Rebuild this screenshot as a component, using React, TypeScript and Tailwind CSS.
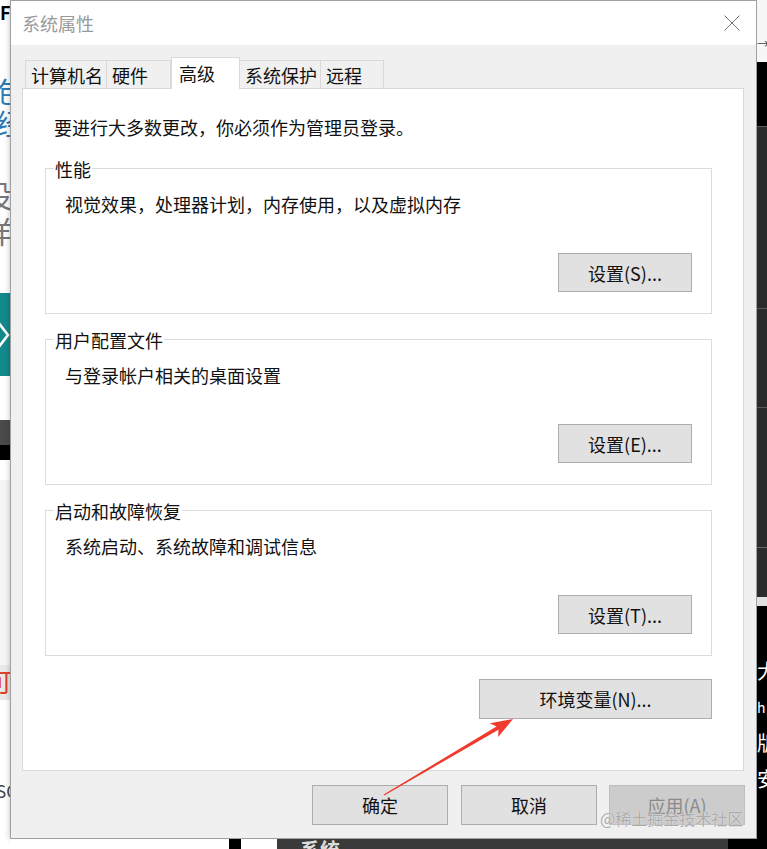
import React from "react";

const TABS = [
  { label: "计算机名", w: "w-[82px]", active: false },
  { label: "硬件", w: "w-[65px]", active: false },
  { label: "高级", w: "w-[69px]", active: true },
  { label: "系统保护", w: "w-[82px]", active: false },
  { label: "远程", w: "w-[64px]", active: false },
];

const GROUPS = [
  { title: "性能", text: "视觉效果，处理器计划，内存使用，以及虚拟内存", button: "设置(S)..." },
  { title: "用户配置文件", text: "与登录帐户相关的桌面设置", button: "设置(E)..." },
  { title: "启动和故障恢复", text: "系统启动、系统故障和调试信息", button: "设置(T)..." },
];

function WinButton({
  children,
  className = "",
  disabled = false,
}: {
  children: React.ReactNode;
  className?: string;
  disabled?: boolean;
}) {
  return (
    <button
      className={`flex items-center justify-center border text-[18px] leading-none ${
        disabled
          ? "bg-[#cccccc] border-[#bfbfbf] text-[#8a8a8a]"
          : "bg-[#e1e1e1] border-[#adadad] text-[#111]"
      } ${className}`}
    >
      {children}
    </button>
  );
}

function GroupBox({ title, text, button }: { title: string; text: string; button: string }) {
  return (
    <div className="w-[667px] border border-[#dcdcdc] flex flex-col pb-[21px]">
      <div className="-mt-[12px] ml-[8px] w-fit bg-white px-[1px] leading-[24px]">{title}</div>
      <div className="mt-[11px] pl-[19px] leading-[24px]">{text}</div>
      <div className="mt-[37px] pr-[19px] flex justify-end">
        <WinButton className="w-[134px] h-[39px]">{button}</WinButton>
      </div>
    </div>
  );
}

function LeftStrip() {
  return (
    <div className="w-[10px] flex flex-col overflow-hidden bg-white">
      <div className="h-[45px] pt-[2px] text-[18px] font-bold leading-[20px] text-black">F</div>
      <div className="h-[95px] pt-[30px] -ml-[4px] text-[28px] leading-[32px] text-[#2d7bb6]">
        <div>包</div>
        <div>经</div>
      </div>
      <div className="h-[153px] pt-[36px] -ml-[18px] text-[30px] leading-[36px] text-[#777]">
        <div>设</div>
        <div>详</div>
      </div>
      <div className="h-[83px] bg-[#12898b] flex items-center">
        <svg width="10" height="30" viewBox="0 0 10 30">
          <polyline points="-2,2 8,15 -2,28" fill="none" stroke="white" strokeWidth="2.5" />
        </svg>
      </div>
      <div className="h-[44px] bg-white" />
      <div className="h-[25px] bg-[#4a4a4a]" />
      <div className="h-[15px] bg-black" />
      <div className="h-[205px] bg-[#f6f6f6] border-t-[20px] border-white" />
      <div className="h-[35px] bg-[#e9e9e9] -ml-[14px] text-[26px] leading-[32px] text-[#e0412a]">可</div>
      <div className="h-[80px] bg-white" />
      <div className="h-[60px] -ml-[4px] text-[17px] leading-[22px] text-[#444]">SC</div>
    </div>
  );
}

function RightStrip() {
  return (
    <div className="w-[10px] flex flex-col overflow-hidden">
      <div className="h-[62px] bg-[#f7f7f7] pt-[37px] text-[12px] leading-[14px] text-[#444]">→</div>
      <div className="h-[64px] bg-black" />
      <div className="h-[182px] bg-[#2b2b2b] border-t border-[#5a5a5a]" />
      <div className="h-[99px] bg-[#2b2b2b] border-t border-[#5a5a5a]" />
      <div className="h-[140px] bg-[#2b2b2b] border-t border-[#5a5a5a]" />
      <div className="h-[50px] bg-[#2b2b2b] border-t border-[#666]" />
      <div className="h-[9px] bg-[#e0e0e0]" />
      <div className="flex-1 bg-black text-white text-[20px] leading-[26px] pt-[52px] flex flex-col gap-[10px]">
        <div>大</div>
        <div className="text-[14px]">h</div>
        <div>版</div>
        <div>安</div>
      </div>
    </div>
  );
}

export default function App() {
  return (
    <div className="relative w-[767px] h-[849px] overflow-hidden bg-white flex font-['Microsoft_YaHei','Noto_Sans_CJK_SC',sans-serif] text-[18px] text-[#111]">
      <LeftStrip />

      <div className="w-[747px] flex flex-col">
        {/* Dialog */}
        <div className="h-[839px] flex flex-col border border-[#a0a0a0] bg-[#f0f0f0] shadow-[0_0_6px_rgba(0,0,0,0.25)]">
          <div className="h-[44px] bg-white flex items-center justify-between pl-[11px] pr-[16px]">
            <span className="text-[#9a9a9a] leading-none">系统属性</span>
            <svg width="16" height="16" viewBox="0 0 16 16">
              <path d="M0.5,0.5 L15.5,15.5 M15.5,0.5 L0.5,15.5" stroke="#777" strokeWidth="1" />
            </svg>
          </div>

          <div className="flex-1 flex flex-col pt-[12px] pl-[11px]">
            {/* Tabs */}
            <div className="flex items-end ml-[3px] h-[31px]">
              {TABS.map((t) =>
                t.active ? (
                  <div
                    key={t.label}
                    className={`${t.w} h-[32px] -mb-px z-10 bg-white border border-b-0 border-[#d9d9d9] flex items-center pl-[7px] pb-[2px] leading-none`}
                  >
                    {t.label}
                  </div>
                ) : (
                  <div
                    key={t.label}
                    className={`${t.w} h-[28px] bg-[#f0f0f0] border border-b-0 border-[#d9d9d9] -ml-px first:ml-0 flex items-center pl-[5px] leading-none`}
                  >
                    {t.label}
                  </div>
                )
              )}
            </div>

            {/* Tab panel */}
            <div className="w-[722px] h-[683px] bg-white border border-[#d9d9d9] flex flex-col">
              <div className="pt-[26px] pl-[31px] leading-[24px]">
                要进行大多数更改，你必须作为管理员登录。
              </div>
              <div className="mt-[29px] ml-[22px] flex flex-col gap-[25px]">
                {GROUPS.map((g) => (
                  <GroupBox key={g.title} {...g} />
                ))}
              </div>
              <div className="mt-[23px] ml-[22px] w-[667px] flex justify-end">
                <WinButton className="w-[233px] h-[40px]">环境变量(N)...</WinButton>
              </div>
            </div>

            {/* Bottom buttons */}
            <div className="mt-[14px] flex justify-end pr-[11px]">
              <WinButton className="w-[136px] h-[40px]">确定</WinButton>
              <WinButton className="w-[136px] h-[40px] ml-[13px]">取消</WinButton>
              <WinButton className="w-[136px] h-[40px] ml-[12px]" disabled>
                应用(A)
              </WinButton>
            </div>
          </div>
        </div>

        {/* Strip below dialog */}
        <div className="h-[10px] flex">
          <div className="w-[219px] bg-white" />
          <div className="w-[12px] bg-black" />
          <div className="w-[36px] bg-white" />
          <div className="w-[451px] bg-[#3a3a3a] pl-[23px] text-[20px] font-bold leading-[20px] pt-[1px] text-[#ddd]">
            系统
          </div>
          <div className="flex-1 bg-black" />
        </div>
      </div>

      <RightStrip />

      {/* Red annotation arrow */}
      <svg className="absolute left-0 top-0 pointer-events-none" width="767" height="849" viewBox="0 0 767 849">
        <path
          d="M383.7,794.6 L496.5,726.4 L489.9,723.3 L513,719 L498.1,737.1 L498.5,729.8 L384.3,795.4 Z"
          fill="#f03a2e"
        />
      </svg>

      {/* Watermark */}
      <div className="absolute left-[600px] top-[806px] text-[16px] leading-[24px] text-[#ababab] [text-shadow:0_0_1px_rgba(255,255,255,0.9)]">
        @稀土掘金技术社区
      </div>
    </div>
  );
}
